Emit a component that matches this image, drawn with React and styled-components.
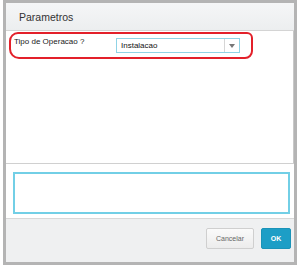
import React from 'react';
import styled, { createGlobalStyle } from 'styled-components';

const Global = createGlobalStyle`
  html, body {
    margin: 0;
    padding: 0;
    background: #fff;
    font-family: "Liberation Sans", Arial, sans-serif;
  }
`;

const Page = styled.div`
  width: 300px;
  height: 267px;
  padding: 0 3px 2px 3px;
  box-sizing: border-box;
`;

const Dialog = styled.div`
  width: 294px;
  height: 265px;
  box-sizing: border-box;
  border: 3px solid #b4b4b4;
  display: flex;
  flex-direction: column;
  background: #fff;
`;

const Header = styled.div`
  height: 28px;
  box-sizing: border-box;
  background: linear-gradient(#f5f6f7, #eceeef);
  border-bottom: 1px solid #d4d4d4;
  display: flex;
  align-items: center;
  padding-left: 13px;
  font-size: 10.5px;
  color: #333;
`;

const Body = styled.div`
  position: relative;
  height: 132px;
  box-sizing: border-box;
  border-right: 1px solid #c8c8c8;
  padding: 6px 8px 0 8px;
`;

const FieldRow = styled.div`
  display: flex;
  align-items: flex-start;
  justify-content: space-between;
  padding-right: 45px;
`;

const Label = styled.label`
  font-size: 8px;
  color: #222;
`;

const Select = styled.div`
  width: 124px;
  height: 15px;
  margin-top: 1px;
  box-sizing: border-box;
  border: 1px solid #8fd3e6;
  display: flex;
  align-items: center;
  font-size: 8px;
  color: #111;
`;

const SelectText = styled.span`
  flex: 1;
  padding-left: 4px;
`;

const Arrow = styled.span`
  width: 14px;
  height: 100%;
  border-left: 1px solid #d6d6d6;
  display: flex;
  align-items: center;
  justify-content: center;

  &::after {
    content: '';
    border-left: 3px solid transparent;
    border-right: 3px solid transparent;
    border-top: 4px solid #777;
  }
`;

const Annotation = styled.div`
  position: absolute;
  left: 3px;
  top: 1px;
  width: 240px;
  height: 23px;
  border: 2px solid #e3202a;
  border-radius: 9px 6px 8px 10px;
`;

const Notes = styled.div`
  border-top: 1px solid #d0d0d0;
  border-bottom: 1px solid #d8d8d8;
  padding: 8px 4px 4px 7px;
  height: 56px;
  box-sizing: border-box;
`;

const NoteBox = styled.div`
  height: 42px;
  box-sizing: border-box;
  border: 2px solid #72cfe6;
`;

const Footer = styled.div`
  flex: 1;
  background: #eff0f1;
  display: flex;
  justify-content: flex-end;
  align-items: flex-start;
  gap: 7px;
  padding: 9px 3px 0 0;
`;

const Button = styled.button`
  height: 21px;
  padding: 0;
  font-family: "Liberation Sans", Arial, sans-serif;
  font-size: 7px;
  border-radius: 2px;
  width: ${p => (p.$primary ? '30px' : '48px')};
  background: ${p => (p.$primary ? '#1d9ec6' : 'linear-gradient(#fafafa, #ececec)')};
  color: ${p => (p.$primary ? '#fff' : '#666')};
  font-weight: ${p => (p.$primary ? 'bold' : 'normal')};
  border: 1px solid ${p => (p.$primary ? '#1a93b8' : '#cfcfcf')};
`;

export default function App() {
  return (
    <Page>
      <Global />
      <Dialog>
        <Header>Parametros</Header>
        <Body>
          <FieldRow>
            <Label>Tipo de Operacao ?</Label>
            <Select>
              <SelectText>Instalacao</SelectText>
              <Arrow />
            </Select>
          </FieldRow>
          <Annotation />
        </Body>
        <Notes>
          <NoteBox />
        </Notes>
        <Footer>
          <Button>Cancelar</Button>
          <Button $primary>OK</Button>
        </Footer>
      </Dialog>
    </Page>
  );
}
